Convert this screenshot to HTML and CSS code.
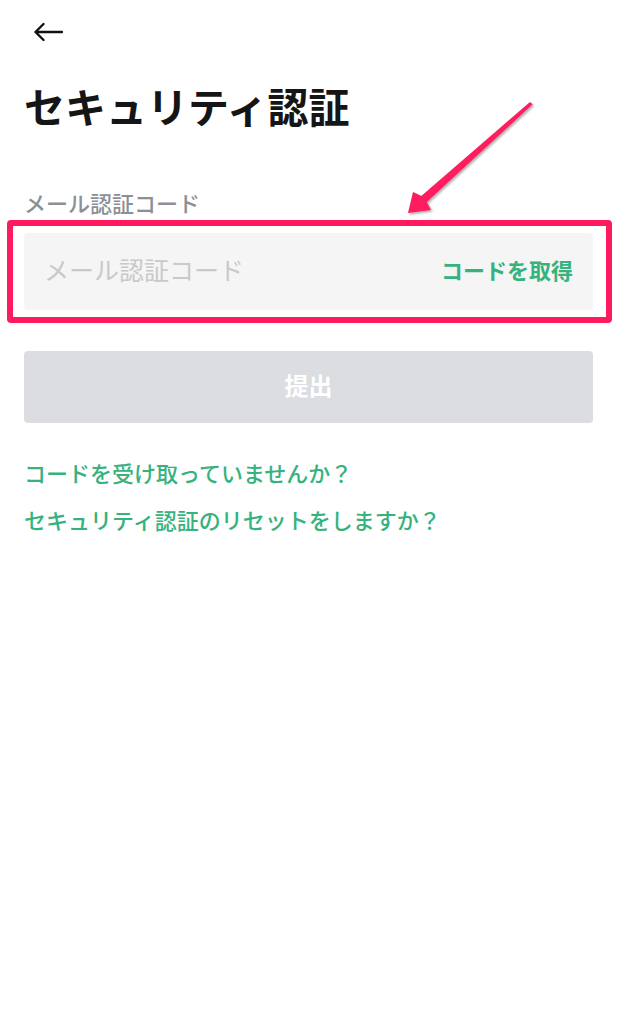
FILE: index.html
```html
<!DOCTYPE html>
<html lang="ja">
<head>
<meta charset="utf-8">
<title>セキュリティ認証</title>
<link rel="stylesheet" href="styles.css">
</head>
<body>
<div class="screen">
  <header class="topbar">
    <button class="back" aria-label="戻る">
      <svg width="30" height="20" viewBox="0 0 30 20" fill="none" stroke="#111" stroke-width="2.4" stroke-linecap="round" stroke-linejoin="round">
        <path d="M29 10H2.5M10.5 2L2.5 10L10.5 18"/>
      </svg>
    </button>
  </header>
  <h1 class="title">セキュリティ認証</h1>
  <label class="field-label">メール認証コード</label>
  <div class="field">
    <span class="placeholder">メール認証コード</span>
    <span class="get-code">コードを取得</span>
  </div>
  <button class="submit">提出</button>
  <div class="links">
    <a class="link">コードを受け取っていませんか？</a>
    <a class="link">セキュリティ認証のリセットをしますか？</a>
  </div>
  <div class="annot-box"></div>
  <svg class="annot-arrow" width="617" height="240" viewBox="0 0 617 240">
    <defs>
      <filter id="sh" x="-20%" y="-20%" width="140%" height="140%">
        <feDropShadow dx="1.5" dy="1.5" stdDeviation="1.2" flood-color="#000" flood-opacity="0.35"/>
      </filter>
    </defs>
    <polygon filter="url(#sh)" fill="#ff1a5e" points="530,101.9 532.6,104.3 426.7,202 431,210 408,213 413,192 421.3,196"/>
  </svg>
</div>
</body>
</html>
```

FILE: styles.css
```css
* {
  box-sizing: border-box;
}

html, body {
  margin: 0;
  padding: 0;
  background: #ffffff;
}

body {
  font-family: "Noto Sans CJK JP", "Noto Sans", sans-serif;
  color: #111111;
}

.screen {
  position: relative;
  width: 617px;
  min-height: 1024px;
  padding: 0 24px;
}

.topbar {
  padding-top: 22px;
  height: 42px;
}

.back {
  display: block;
  margin: 0 0 0 9px;
  padding: 0;
  border: 0;
  background: none;
  width: 30px;
  height: 20px;
}

.back svg {
  display: block;
}

.title {
  margin: 43px 0 0 0;
  font-size: 41px;
  line-height: 41px;
  font-weight: 700;
  color: #151515;
  letter-spacing: 0;
}

.field-label {
  display: block;
  margin-top: 65px;
  font-size: 22px;
  line-height: 22px;
  font-weight: 500;
  color: #8c8f95;
}

.field {
  margin-top: 20px;
  height: 77px;
  background: #f5f5f5;
  border-radius: 4px;
  display: flex;
  align-items: center;
  justify-content: space-between;
  padding: 0 20px 5px 20px;
}

.placeholder {
  font-size: 25px;
  line-height: 25px;
  color: #c9c9c9;
  font-weight: 400;
}

.get-code {
  font-size: 22px;
  line-height: 22px;
  color: #35b27e;
  font-weight: 700;
}

.submit {
  display: flex;
  align-items: center;
  justify-content: center;
  width: 100%;
  height: 72px;
  margin-top: 41px;
  border: 0;
  border-radius: 4px;
  background: #dcdde0;
  color: #ffffff;
  font-family: "Noto Sans CJK JP", "Noto Sans", sans-serif;
  font-size: 24px;
  font-weight: 700;
  padding: 0 0 5px 0;
}

.links {
  margin-top: 38px;
  display: flex;
  flex-direction: column;
  gap: 25px;
}

.link {
  font-size: 22px;
  line-height: 22px;
  font-weight: 500;
  color: #35b27e;
}

.annot-box {
  position: absolute;
  left: 7px;
  top: 220px;
  width: 605px;
  height: 103px;
  border: 6px solid #ff1a5e;
  border-radius: 4px;
  pointer-events: none;
}

.annot-arrow {
  position: absolute;
  left: 0;
  top: 0;
  pointer-events: none;
}
```
